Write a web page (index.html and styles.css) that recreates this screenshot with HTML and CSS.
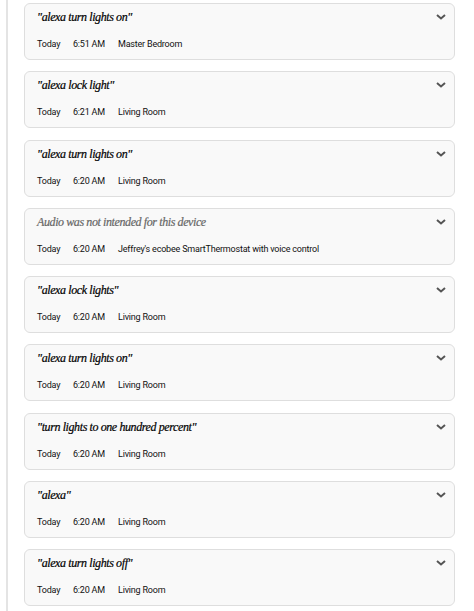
FILE: index.html
```html
<!DOCTYPE html>
<html>
<head>
<meta charset="utf-8">
<link rel="stylesheet" href="styles.css">
</head>
<body>
<div class="rail">
  <div class="list">
    <div class="card">
      <div class="top"><span class="quote">"alexa turn lights on"</span><svg class="chev" viewBox="0 0 10 6"><path d="M1 1 L5 4.5 L9 1" /></svg></div>
      <div class="meta"><span class="day">Today</span><span class="time">6:51 AM</span><span>Master Bedroom</span></div>
    </div>
    <div class="card">
      <div class="top"><span class="quote">"alexa lock light"</span><svg class="chev" viewBox="0 0 10 6"><path d="M1 1 L5 4.5 L9 1" /></svg></div>
      <div class="meta"><span class="day">Today</span><span class="time">6:21 AM</span><span>Living Room</span></div>
    </div>
    <div class="card">
      <div class="top"><span class="quote">"alexa turn lights on"</span><svg class="chev" viewBox="0 0 10 6"><path d="M1 1 L5 4.5 L9 1" /></svg></div>
      <div class="meta"><span class="day">Today</span><span class="time">6:20 AM</span><span>Living Room</span></div>
    </div>
    <div class="card">
      <div class="top"><span class="quote muted">Audio was not intended for this device</span><svg class="chev" viewBox="0 0 10 6"><path d="M1 1 L5 4.5 L9 1" /></svg></div>
      <div class="meta"><span class="day">Today</span><span class="time">6:20 AM</span><span>Jeffrey's ecobee SmartThermostat with voice control</span></div>
    </div>
    <div class="card">
      <div class="top"><span class="quote">"alexa lock lights"</span><svg class="chev" viewBox="0 0 10 6"><path d="M1 1 L5 4.5 L9 1" /></svg></div>
      <div class="meta"><span class="day">Today</span><span class="time">6:20 AM</span><span>Living Room</span></div>
    </div>
    <div class="card">
      <div class="top"><span class="quote">"alexa turn lights on"</span><svg class="chev" viewBox="0 0 10 6"><path d="M1 1 L5 4.5 L9 1" /></svg></div>
      <div class="meta"><span class="day">Today</span><span class="time">6:20 AM</span><span>Living Room</span></div>
    </div>
    <div class="card">
      <div class="top"><span class="quote">"turn lights to one hundred percent"</span><svg class="chev" viewBox="0 0 10 6"><path d="M1 1 L5 4.5 L9 1" /></svg></div>
      <div class="meta"><span class="day">Today</span><span class="time">6:20 AM</span><span>Living Room</span></div>
    </div>
    <div class="card">
      <div class="top"><span class="quote">"alexa"</span><svg class="chev" viewBox="0 0 10 6"><path d="M1 1 L5 4.5 L9 1" /></svg></div>
      <div class="meta"><span class="day">Today</span><span class="time">6:20 AM</span><span>Living Room</span></div>
    </div>
    <div class="card">
      <div class="top"><span class="quote">"alexa turn lights off"</span><svg class="chev" viewBox="0 0 10 6"><path d="M1 1 L5 4.5 L9 1" /></svg></div>
      <div class="meta"><span class="day">Today</span><span class="time">6:20 AM</span><span>Living Room</span></div>
    </div>
  </div>
</div>
</body>
</html>
```
FILE: styles.css
```css
html, body {
  margin: 0;
  padding: 0;
  background: #ffffff;
  height: 100%;
  overflow: hidden;
}
.rail {
  margin-left: 6px;
  border-left: 2px solid #e4e4e4;
  padding: 3px 0 0 16px;
  min-height: 611px;
  box-sizing: border-box;
  width: 449px;
}
.list {
  display: flex;
  flex-direction: column;
  gap: 11.25px;
}
.card {
  height: 57px;
  box-sizing: border-box;
  border: 1px solid #dedede;
  border-radius: 6px;
  background: #f9f9f9;
  padding: 0 12px 0 12px;
  display: flex;
  flex-direction: column;
}
.top {
  display: flex;
  justify-content: space-between;
  align-items: flex-start;
  height: 28px;
}
.quote {
  font-family: "Liberation Serif", serif;
  font-style: italic;
  font-size: 12px;
  line-height: 14px;
  letter-spacing: -0.4px;
  color: #000;
  margin-top: 6px;
  -webkit-text-stroke: 0.2px #000;
}
.quote.muted {
  color: #666;
  -webkit-text-stroke: 0.2px #666;
}
.chev {
  width: 10px;
  height: 6px;
  margin-top: 10px;
  margin-right: -4px;
  fill: none;
  stroke: #555;
  stroke-width: 2;
}
.meta {
  font-family: Roboto, sans-serif;
  font-size: 9px;
  line-height: 12px;
  letter-spacing: -0.2px;
  color: #111;
  display: flex;
  margin-top: 6px;
}
.day {
  width: 36px;
}
.time {
  width: 45px;
}
```
